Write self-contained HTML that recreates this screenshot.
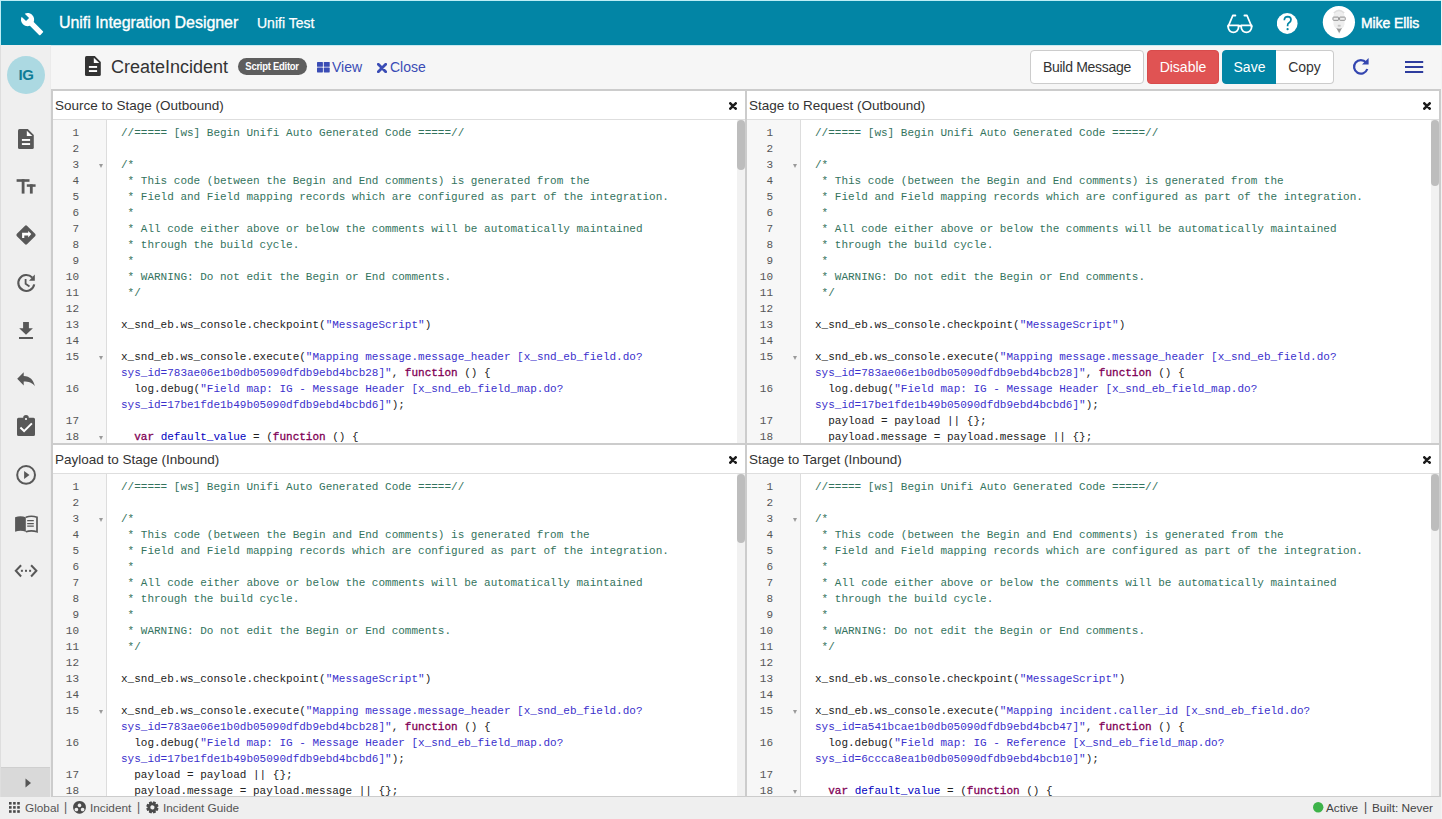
<!DOCTYPE html>
<html><head><meta charset="utf-8"><title>Unifi Integration Designer</title>
<style>
*{box-sizing:border-box;margin:0;padding:0}
html,body{width:1442px;height:819px;overflow:hidden}
body{position:relative;background:#efefef;font-family:"Liberation Sans",sans-serif;color:#333}
.abs{position:absolute}
#topbar{position:absolute;left:0;top:0;width:1441px;height:45px;background:#0285a5;border-top:1px solid #bdeef6;border-left:1px solid #bdeef6}
#topbar .t1{position:absolute;left:58px;top:13px;font-size:16px;-webkit-text-stroke:0.35px #fff;letter-spacing:-0.05px;color:#fff;white-space:nowrap}
#topbar .t2{position:absolute;left:256px;top:14px;font-size:14px;-webkit-text-stroke:0.25px #fff;color:#fff;white-space:nowrap}
#topbar .me{position:absolute;left:1360px;top:14px;font-size:14px;-webkit-text-stroke:0.45px #fff;letter-spacing:-0.1px;color:#fff;white-space:nowrap}
#sidebar{position:absolute;left:0;top:45px;width:51px;height:753px;background:#efefef;border-right:1px solid #ebebeb;border-left:1px solid #dedede}
#sidebar .ig{position:absolute;left:6px;top:11px;width:38px;height:38px;border-radius:50%;background:#acd9e2;color:#0e7c96;font-size:15px;font-weight:bold;text-align:center;line-height:38px;letter-spacing:-0.5px}
#sidebar svg{position:absolute}
#sidebar .exp{position:absolute;left:0px;top:722px;width:49px;height:31px;background:#d9d9d9;border-top:1px solid #cfcfcf}
#toolbar{position:absolute;left:51px;top:45px;width:1391px;height:44px;background:#f6f6f6;border-top:1px solid #c9e9f0}
.tt{position:absolute;white-space:nowrap}
.btn{position:absolute;top:50px;height:34px;font-size:14px;line-height:32.5px;text-align:center;border-radius:4px;white-space:nowrap}
.panel{position:absolute;width:696px;height:356px;border:2px solid #cccccc;background:#fff}
.ph{position:absolute;left:0;top:0;width:100%;height:29px;border-bottom:1px solid #dedede;background:#fff}
.pt{position:absolute;left:2px;top:7px;font-size:13.5px;color:#333;white-space:nowrap}
.px{position:absolute;left:676px;top:11px}
.pc{position:absolute;left:0;top:29px;width:692px;bottom:0;overflow:hidden;background:#fff}
.gut{position:absolute;left:0;top:0;width:54px;height:100%;background:#f7f7f7;border-right:1px solid #dddddd;padding-top:5px}
.code{position:absolute;left:68px;top:5px;font-family:"Liberation Mono",monospace;font-size:11px;color:#222;white-space:pre}
.gl{position:relative;height:16px;font-family:"Liberation Mono",monospace;font-size:11px;line-height:16px;color:#555}
.ln{position:absolute;right:27px;top:0}
.fold{position:absolute;left:45.5px;top:7px;width:0;height:0;border-left:2.5px solid transparent;border-right:2.5px solid transparent;border-top:4px solid #9a9a9a}
.cl{height:16px;line-height:16px}
.c{color:#33735d}.s{color:#3a30cc}.k{color:#7f0055;-webkit-text-stroke:0.3px #7f0055}.d{color:#0000c0}.p{color:#222}
.track{position:absolute;right:0;top:0;width:8px;height:100%;background:#f1f1f1}
.thumb{position:absolute;right:0;top:0;width:8px;background:#bdbdbd;border-radius:4px}
#footer{position:absolute;left:0;top:797px;width:1442px;height:22px;background:#efefef;font-size:12px;color:#444}

#redge{position:absolute;left:1441px;top:0;width:1px;height:819px;background:#f3f3f3}

</style></head><body>
<div id="topbar">
  <svg class="abs" style="left:18.7px;top:10.7px" width="24.2" height="24.2" viewBox="0 0 24 24"><path fill="#fff" d="M22.7 19l-9.1-9.1c.9-2.3.4-5-1.5-6.9-2-2-5-2.4-7.4-1.3L9 6 6 9 1.6 4.7C.4 7.1.9 10.1 2.9 12.1c1.9 1.9 4.6 2.4 6.9 1.5l9.1 9.1c.4.4 1 .4 1.4 0l2.3-2.3c.5-.4.5-1.1.1-1.4z"/></svg>
  <div class="t1">Unifi Integration Designer</div>
  <div class="t2">Unifi Test</div>
  <svg class="abs" style="left:1220px;top:5px" width="40" height="35" viewBox="1220 5 40 35"><g fill="none" stroke="#fff" stroke-width="1.8" stroke-linejoin="round" stroke-linecap="round"><path d="M1227.2 24.3H1237.6V26.1A5.2 5.2 0 0 1 1227.2 26.1Z"/><path d="M1240.2 24.3H1250.6V26.1A5.2 5.2 0 0 1 1240.2 26.1Z"/><path d="M1237.6 25.2Q1238.9 24.3 1240.2 25.2"/><path d="M1227.2 25.5L1231.8 14.5H1234.4"/><path d="M1250.6 25.5L1246 14.5H1243.4"/></g></svg>
  <svg class="abs" style="left:1276px;top:11px" width="22" height="22" viewBox="0 0 22 22"><circle cx="10.2" cy="11.5" r="10.4" fill="#fff"/><path d="M7.3 8.2Q7.5 4.6 10.7 4.6Q14 4.7 14 7.7Q14 9.6 11.8 10.9Q10.6 11.7 10.6 13.5V14.3" fill="none" stroke="#0285a5" stroke-width="1.7"/><circle cx="10.6" cy="17.2" r="1.1" fill="#0285a5"/></svg>
  <svg class="abs" style="left:1321px;top:5px" width="34" height="34" viewBox="1322 5.5 34 34"><circle cx="1338.9" cy="21.7" r="16.1" fill="#fff"/><path d="M1333.5 16Q1333.5 9 1339 9Q1344.5 9 1344.5 16V24Q1344 27 1341.5 28.5L1339.2 34 1336.8 28.5Q1334 27 1333.5 24Z" fill="#eeeeee"/><path d="M1333.8 12.5Q1339 7.5 1344.2 12.5" fill="none" stroke="#dddddd" stroke-width="1.5"/><rect x="1333" y="16.6" width="5.6" height="3.2" rx="0.6" fill="none" stroke="#8f8f8f" stroke-width="1"/><rect x="1339.6" y="16.6" width="5.6" height="3.2" rx="0.6" fill="none" stroke="#8f8f8f" stroke-width="1"/><path d="M1336.3 27.5L1339.2 32.5 1342 27.5Q1339.2 29 1336.3 27.5Z" fill="#999"/><rect x="1337.8" y="24.3" width="2.8" height="1.8" fill="#c4c4c4"/></svg>
  <div class="me">Mike Ellis</div>
</div>
<div id="sidebar">
  <div class="ig">IG</div>
  <div class="exp"><svg style="left:24px;top:10px" width="7" height="10" viewBox="0 0 7 10"><path d="M0.5 0.5L6 5 0.5 9.5z" fill="#555"/></svg></div>
  <svg style="left:-1px;top:0" width="51" height="722" viewBox="0 45 51 722"><g fill="#585858">
<path d="M18 130.5Q18 129 19.5 129H27.8L33.8 135V147.5Q33.8 149 32.3 149H19.5Q18 149 18 147.5Z"/>
<path d="M26.8 130.8V135.9H32.3Z" fill="#fff"/>
<rect x="21.9" y="139" width="8.2" height="1.9" fill="#fff"/><rect x="21.9" y="143.1" width="8.2" height="1.9" fill="#fff"/>
<rect x="16.6" y="179.2" width="12.9" height="2.6"/><rect x="21.7" y="179.2" width="2.8" height="14.4"/>
<rect x="26.8" y="184.3" width="8.8" height="2.5"/><rect x="29.9" y="184.3" width="2.8" height="9.3"/>
<path d="M24.8 225.9Q26 224.7 27.2 225.9L35.1 233.8Q36.3 235 35.1 236.2L27.2 244.1Q26 245.3 24.8 244.1L16.9 236.2Q15.7 235 16.9 233.8Z"/>
<path d="M22.1 238.1V232.7H28.2V230.9L31.3 234.1 28.2 237.4V235.4H24.3V238.1Z" fill="#fff"/>
<path d="M34.2 284.4A8 8 0 1 1 32.2 277.5" fill="none" stroke="#585858" stroke-width="2.1"/>
<path d="M29 280.7L34.8 274.6V280.7Z"/>
<path d="M25.6 279.1V283.8L29.5 286.6" fill="none" stroke="#585858" stroke-width="1.8"/>
<path d="M23.1 322H28.9V328.2H32.9L26 334.8 19.2 328.2H23.1Z"/>
<rect x="19" y="337" width="14" height="2"/>
<path d="M17.2 378.8L23.7 372.2V376.1C30 376.3 33.5 380 34.9 386.2 32.5 382.8 28.5 381.6 23.7 381.6V385.5Z"/>
<path d="M17 419.3Q17 417.8 18.5 417.8H23.2A2.8 2.8 0 0 1 28.8 417.8H33.5Q35 417.8 35 419.3V434.5Q35 436 33.5 436H18.5Q17 436 17 434.5Z"/>
<circle cx="26" cy="419" r="1.1" fill="#fff"/>
<path d="M20.4 427.6L24.1 431.1 31.9 423.4" fill="none" stroke="#fff" stroke-width="2"/>
<circle cx="26.1" cy="474.9" r="8.9" fill="none" stroke="#585858" stroke-width="2"/>
<path d="M24.1 470.9V478.9L29.5 474.9Z"/>
<path d="M15.1 517.2Q20.5 515.3 25.8 517.2V531.8Q20.5 529.9 15.1 531.8Z"/>
<path d="M25.8 517.2Q31.4 515.3 37 517.2V531.8Q31.4 529.9 25.8 531.8" fill="none" stroke="#585858" stroke-width="1.7"/>
<path d="M27.2 520.7H33.8M27.2 523.6H33.8M27.2 526.2H33.8" stroke="#585858" stroke-width="1.2"/>
<path d="M21.1 565.2L15.8 570.8 21.1 576.5M31.1 565.2L36.4 570.8 31.1 576.5" fill="none" stroke="#585858" stroke-width="2"/>
<rect x="20.9" y="569.8" width="2" height="2"/><rect x="25" y="569.8" width="2" height="2"/><rect x="29.1" y="569.8" width="2" height="2"/>
</g></svg>
</div>
<div id="toolbar">
  <svg class="abs" style="left:34px;top:10px" width="17" height="21" viewBox="18 129 17 21"><path d="M18 130.5Q18 129 19.5 129H27.8L33.8 135V147.5Q33.8 149 32.3 149H19.5Q18 149 18 147.5Z" fill="#333"/><path d="M26.8 130.8V135.9H32.3Z" fill="#fff"/><rect x="21.9" y="139" width="8.2" height="1.9" fill="#fff"/><rect x="21.9" y="143.1" width="8.2" height="1.9" fill="#fff"/></svg>
  <div class="tt" style="left:60px;top:11px;font-size:18px;color:#333">CreateIncident</div>
  <div class="tt" style="left:187px;top:12px;width:69px;height:17px;border-radius:9px;background:#5e5e5e;color:#fff;font-size:11px;font-weight:bold;line-height:17px;text-align:center;letter-spacing:-0.3px"><span style="display:inline-block;transform:scaleX(0.86)">Script Editor</span></div>
  <svg class="abs" style="left:265.5px;top:15.5px" width="14" height="12" viewBox="0 0 14 12"><g fill="#3a4cb5"><rect x="0" y="0" width="5.9" height="4.8" rx="0.6"/><rect x="6.8" y="0" width="5.9" height="4.8" rx="0.6"/><rect x="0" y="5.6" width="5.9" height="4.8" rx="0.6"/><rect x="6.8" y="5.6" width="5.9" height="4.8" rx="0.6"/></g></svg>
  <div class="tt" style="left:281px;top:13px;font-size:14px;color:#3a4cb5">View</div>
  <svg class="abs" style="left:326px;top:17px" width="10" height="10" viewBox="0 0 10 10"><path d="M1.3 1.3L8.7 8.7M8.7 1.3L1.3 8.7" stroke="#3a4cb5" stroke-width="2.8" stroke-linecap="round"/></svg>
  <div class="tt" style="left:339px;top:13px;font-size:14px;color:#3a4cb5">Close</div>
  <div class="btn" style="left:979px;top:4px;width:114px;background:#fff;border:1px solid #cccccc;color:#333;letter-spacing:-0.3px">Build Message</div>
  <div class="btn" style="left:1096px;top:4px;width:72px;background:#e05353;border:1px solid #d84b4b;color:#fff">Disable</div>
  <div class="btn" style="left:1171px;top:4px;width:55px;background:#0285a5;border:1px solid #0285a5;color:#fff;border-radius:4px 0 0 4px">Save</div>
  <div class="btn" style="left:1225px;top:4px;width:58px;background:#fff;border:1px solid #cccccc;border-left:none;color:#333;border-radius:0 4px 4px 0">Copy</div>
  <svg class="abs" style="left:1300.3px;top:10.8px" width="20" height="20" viewBox="0 0 20 20"><path d="M15.1 5.5A6.8 6.8 0 1 0 16.3 12" fill="none" stroke="#3446b0" stroke-width="2.2"/><path d="M11 7.5L17.6 7.5 17.6 1.1z" fill="#3446b0"/></svg>
  <svg class="abs" style="left:1354px;top:15px" width="19" height="14" viewBox="0 0 19 14"><g fill="#2e3d9e"><rect x="0" y="0" width="18.2" height="2"/><rect x="0" y="5" width="18.2" height="2"/><rect x="0" y="10" width="18.2" height="2"/></g></svg>
</div>
<div class="panel" style="left:51px;top:89px;height:356px">
<div class="ph"><span class="pt">Source to Stage (Outbound)</span><svg class="px" width="8" height="8" viewBox="0 0 8 8"><path d="M1.3 1.3L6.7 6.7M6.7 1.3L1.3 6.7" stroke="#1c1c1c" stroke-width="2.6" stroke-linecap="round"/></svg></div>
<div class="pc"><div class="gut"><div class="gl"><span class="ln">1</span></div><div class="gl"><span class="ln">2</span></div><div class="gl"><span class="ln">3</span><i class="fold"></i></div><div class="gl"><span class="ln">4</span></div><div class="gl"><span class="ln">5</span></div><div class="gl"><span class="ln">6</span></div><div class="gl"><span class="ln">7</span></div><div class="gl"><span class="ln">8</span></div><div class="gl"><span class="ln">9</span></div><div class="gl"><span class="ln">10</span></div><div class="gl"><span class="ln">11</span></div><div class="gl"><span class="ln">12</span></div><div class="gl"><span class="ln">13</span></div><div class="gl"><span class="ln">14</span></div><div class="gl"><span class="ln">15</span><i class="fold"></i></div><div class="gl"><span class="ln"></span></div><div class="gl"><span class="ln">16</span></div><div class="gl"><span class="ln"></span></div><div class="gl"><span class="ln">17</span></div><div class="gl"><span class="ln">18</span><i class="fold"></i></div></div><div class="code"><div class="cl"><span class="c">//===== [ws] Begin Unifi Auto Generated Code =====//</span></div><div class="cl"></div><div class="cl"><span class="c">/*</span></div><div class="cl"><span class="c"> * This code (between the Begin and End comments) is generated from the</span></div><div class="cl"><span class="c"> * Field and Field mapping records which are configured as part of the integration.</span></div><div class="cl"><span class="c"> *</span></div><div class="cl"><span class="c"> * All code either above or below the comments will be automatically maintained</span></div><div class="cl"><span class="c"> * through the build cycle.</span></div><div class="cl"><span class="c"> *</span></div><div class="cl"><span class="c"> * WARNING: Do not edit the Begin or End comments.</span></div><div class="cl"><span class="c"> */</span></div><div class="cl"></div><div class="cl"><span class="p">x_snd_eb.ws_console.checkpoint(</span><span class="s">"MessageScript"</span><span class="p">)</span></div><div class="cl"></div><div class="cl"><span class="p">x_snd_eb.ws_console.execute(</span><span class="s">"Mapping message.message_header [x_snd_eb_field.do?</span></div><div class="cl"><span class="s">sys_id=783ae06e1b0db05090dfdb9ebd4bcb28]"</span><span class="p">, </span><span class="k">function</span><span class="p"> () {</span></div><div class="cl"><span class="p">  log.debug(</span><span class="s">"Field map: IG - Message Header [x_snd_eb_field_map.do?</span></div><div class="cl"><span class="s">sys_id=17be1fde1b49b05090dfdb9ebd4bcbd6]"</span><span class="p">);</span></div><div class="cl"></div><div class="cl"><span class="p">  </span><span class="k">var</span><span class="p"> </span><span class="d">default_value</span><span class="p"> = (</span><span class="k">function</span><span class="p"> () {</span></div></div>
<div class="track"></div><div class="thumb" style="height:50px"></div></div>
</div><div class="panel" style="left:745px;top:89px;height:356px">
<div class="ph"><span class="pt">Stage to Request (Outbound)</span><svg class="px" width="8" height="8" viewBox="0 0 8 8"><path d="M1.3 1.3L6.7 6.7M6.7 1.3L1.3 6.7" stroke="#1c1c1c" stroke-width="2.6" stroke-linecap="round"/></svg></div>
<div class="pc"><div class="gut"><div class="gl"><span class="ln">1</span></div><div class="gl"><span class="ln">2</span></div><div class="gl"><span class="ln">3</span><i class="fold"></i></div><div class="gl"><span class="ln">4</span></div><div class="gl"><span class="ln">5</span></div><div class="gl"><span class="ln">6</span></div><div class="gl"><span class="ln">7</span></div><div class="gl"><span class="ln">8</span></div><div class="gl"><span class="ln">9</span></div><div class="gl"><span class="ln">10</span></div><div class="gl"><span class="ln">11</span></div><div class="gl"><span class="ln">12</span></div><div class="gl"><span class="ln">13</span></div><div class="gl"><span class="ln">14</span></div><div class="gl"><span class="ln">15</span><i class="fold"></i></div><div class="gl"><span class="ln"></span></div><div class="gl"><span class="ln">16</span></div><div class="gl"><span class="ln"></span></div><div class="gl"><span class="ln">17</span></div><div class="gl"><span class="ln">18</span></div></div><div class="code"><div class="cl"><span class="c">//===== [ws] Begin Unifi Auto Generated Code =====//</span></div><div class="cl"></div><div class="cl"><span class="c">/*</span></div><div class="cl"><span class="c"> * This code (between the Begin and End comments) is generated from the</span></div><div class="cl"><span class="c"> * Field and Field mapping records which are configured as part of the integration.</span></div><div class="cl"><span class="c"> *</span></div><div class="cl"><span class="c"> * All code either above or below the comments will be automatically maintained</span></div><div class="cl"><span class="c"> * through the build cycle.</span></div><div class="cl"><span class="c"> *</span></div><div class="cl"><span class="c"> * WARNING: Do not edit the Begin or End comments.</span></div><div class="cl"><span class="c"> */</span></div><div class="cl"></div><div class="cl"><span class="p">x_snd_eb.ws_console.checkpoint(</span><span class="s">"MessageScript"</span><span class="p">)</span></div><div class="cl"></div><div class="cl"><span class="p">x_snd_eb.ws_console.execute(</span><span class="s">"Mapping message.message_header [x_snd_eb_field.do?</span></div><div class="cl"><span class="s">sys_id=783ae06e1b0db05090dfdb9ebd4bcb28]"</span><span class="p">, </span><span class="k">function</span><span class="p"> () {</span></div><div class="cl"><span class="p">  log.debug(</span><span class="s">"Field map: IG - Message Header [x_snd_eb_field_map.do?</span></div><div class="cl"><span class="s">sys_id=17be1fde1b49b05090dfdb9ebd4bcbd6]"</span><span class="p">);</span></div><div class="cl"><span class="p">  payload = payload || {};</span></div><div class="cl"><span class="p">  payload.message = payload.message || {};</span></div></div>
<div class="track"></div><div class="thumb" style="height:66px"></div></div>
</div><div class="panel" style="left:51px;top:443px;height:355px">
<div class="ph"><span class="pt">Payload to Stage (Inbound)</span><svg class="px" width="8" height="8" viewBox="0 0 8 8"><path d="M1.3 1.3L6.7 6.7M6.7 1.3L1.3 6.7" stroke="#1c1c1c" stroke-width="2.6" stroke-linecap="round"/></svg></div>
<div class="pc"><div class="gut"><div class="gl"><span class="ln">1</span></div><div class="gl"><span class="ln">2</span></div><div class="gl"><span class="ln">3</span><i class="fold"></i></div><div class="gl"><span class="ln">4</span></div><div class="gl"><span class="ln">5</span></div><div class="gl"><span class="ln">6</span></div><div class="gl"><span class="ln">7</span></div><div class="gl"><span class="ln">8</span></div><div class="gl"><span class="ln">9</span></div><div class="gl"><span class="ln">10</span></div><div class="gl"><span class="ln">11</span></div><div class="gl"><span class="ln">12</span></div><div class="gl"><span class="ln">13</span></div><div class="gl"><span class="ln">14</span></div><div class="gl"><span class="ln">15</span><i class="fold"></i></div><div class="gl"><span class="ln"></span></div><div class="gl"><span class="ln">16</span></div><div class="gl"><span class="ln"></span></div><div class="gl"><span class="ln">17</span></div><div class="gl"><span class="ln">18</span></div></div><div class="code"><div class="cl"><span class="c">//===== [ws] Begin Unifi Auto Generated Code =====//</span></div><div class="cl"></div><div class="cl"><span class="c">/*</span></div><div class="cl"><span class="c"> * This code (between the Begin and End comments) is generated from the</span></div><div class="cl"><span class="c"> * Field and Field mapping records which are configured as part of the integration.</span></div><div class="cl"><span class="c"> *</span></div><div class="cl"><span class="c"> * All code either above or below the comments will be automatically maintained</span></div><div class="cl"><span class="c"> * through the build cycle.</span></div><div class="cl"><span class="c"> *</span></div><div class="cl"><span class="c"> * WARNING: Do not edit the Begin or End comments.</span></div><div class="cl"><span class="c"> */</span></div><div class="cl"></div><div class="cl"><span class="p">x_snd_eb.ws_console.checkpoint(</span><span class="s">"MessageScript"</span><span class="p">)</span></div><div class="cl"></div><div class="cl"><span class="p">x_snd_eb.ws_console.execute(</span><span class="s">"Mapping message.message_header [x_snd_eb_field.do?</span></div><div class="cl"><span class="s">sys_id=783ae06e1b0db05090dfdb9ebd4bcb28]"</span><span class="p">, </span><span class="k">function</span><span class="p"> () {</span></div><div class="cl"><span class="p">  log.debug(</span><span class="s">"Field map: IG - Message Header [x_snd_eb_field_map.do?</span></div><div class="cl"><span class="s">sys_id=17be1fde1b49b05090dfdb9ebd4bcbd6]"</span><span class="p">);</span></div><div class="cl"><span class="p">  payload = payload || {};</span></div><div class="cl"><span class="p">  payload.message = payload.message || {};</span></div></div>
<div class="track"></div><div class="thumb" style="height:69px"></div></div>
</div><div class="panel" style="left:745px;top:443px;height:355px">
<div class="ph"><span class="pt">Stage to Target (Inbound)</span><svg class="px" width="8" height="8" viewBox="0 0 8 8"><path d="M1.3 1.3L6.7 6.7M6.7 1.3L1.3 6.7" stroke="#1c1c1c" stroke-width="2.6" stroke-linecap="round"/></svg></div>
<div class="pc"><div class="gut"><div class="gl"><span class="ln">1</span></div><div class="gl"><span class="ln">2</span></div><div class="gl"><span class="ln">3</span><i class="fold"></i></div><div class="gl"><span class="ln">4</span></div><div class="gl"><span class="ln">5</span></div><div class="gl"><span class="ln">6</span></div><div class="gl"><span class="ln">7</span></div><div class="gl"><span class="ln">8</span></div><div class="gl"><span class="ln">9</span></div><div class="gl"><span class="ln">10</span></div><div class="gl"><span class="ln">11</span></div><div class="gl"><span class="ln">12</span></div><div class="gl"><span class="ln">13</span></div><div class="gl"><span class="ln">14</span></div><div class="gl"><span class="ln">15</span><i class="fold"></i></div><div class="gl"><span class="ln"></span></div><div class="gl"><span class="ln">16</span></div><div class="gl"><span class="ln"></span></div><div class="gl"><span class="ln">17</span></div><div class="gl"><span class="ln">18</span><i class="fold"></i></div></div><div class="code"><div class="cl"><span class="c">//===== [ws] Begin Unifi Auto Generated Code =====//</span></div><div class="cl"></div><div class="cl"><span class="c">/*</span></div><div class="cl"><span class="c"> * This code (between the Begin and End comments) is generated from the</span></div><div class="cl"><span class="c"> * Field and Field mapping records which are configured as part of the integration.</span></div><div class="cl"><span class="c"> *</span></div><div class="cl"><span class="c"> * All code either above or below the comments will be automatically maintained</span></div><div class="cl"><span class="c"> * through the build cycle.</span></div><div class="cl"><span class="c"> *</span></div><div class="cl"><span class="c"> * WARNING: Do not edit the Begin or End comments.</span></div><div class="cl"><span class="c"> */</span></div><div class="cl"></div><div class="cl"><span class="p">x_snd_eb.ws_console.checkpoint(</span><span class="s">"MessageScript"</span><span class="p">)</span></div><div class="cl"></div><div class="cl"><span class="p">x_snd_eb.ws_console.execute(</span><span class="s">"Mapping incident.caller_id [x_snd_eb_field.do?</span></div><div class="cl"><span class="s">sys_id=a541bcae1b0db05090dfdb9ebd4bcb47]"</span><span class="p">, </span><span class="k">function</span><span class="p"> () {</span></div><div class="cl"><span class="p">  log.debug(</span><span class="s">"Field map: IG - Reference [x_snd_eb_field_map.do?</span></div><div class="cl"><span class="s">sys_id=6ccca8ea1b0db05090dfdb9ebd4bcb10]"</span><span class="p">);</span></div><div class="cl"></div><div class="cl"><span class="p">  </span><span class="k">var</span><span class="p"> </span><span class="d">default_value</span><span class="p"> = (</span><span class="k">function</span><span class="p"> () {</span></div></div>
<div class="track"></div><div class="thumb" style="height:57px"></div></div>
</div>
<div id="footer">
  <svg style="position:absolute;left:0;top:0" width="1442" height="22" viewBox="0 797 1442 22">
<g fill="#4a4a4a">
<rect x="9" y="802" width="2.6" height="2.6"/><rect x="13.1" y="802" width="2.6" height="2.6"/><rect x="17.2" y="802" width="2.6" height="2.6"/>
<rect x="9" y="806.1" width="2.6" height="2.6"/><rect x="13.1" y="806.1" width="2.6" height="2.6"/><rect x="17.2" y="806.1" width="2.6" height="2.6"/>
<rect x="9" y="810.2" width="2.6" height="2.6"/><rect x="13.1" y="810.2" width="2.6" height="2.6"/><rect x="17.2" y="810.2" width="2.6" height="2.6"/>
<path fill-rule="evenodd" d="M79.5 800.9a6.4 6.4 0 1 0 0.01 0zM79.5 803.6a1.8 1.8 0 1 0 0.01 0zM76.4 807.7a1.8 1.8 0 1 0 0.01 0zM82.6 807.7a1.8 1.8 0 1 0 0.01 0z"/>
<g transform="translate(152.4 807.4) rotate(22.5)"><path fill-rule="evenodd" d="M4.40 -1.66L6.15 -1.37L6.15 1.37L4.40 1.66L4.28 1.94L5.32 3.38L3.38 5.32L1.94 4.28L1.66 4.40L1.37 6.15L-1.37 6.15L-1.66 4.40L-1.94 4.28L-3.38 5.32L-5.32 3.38L-4.28 1.94L-4.40 1.66L-6.15 1.37L-6.15 -1.37L-4.40 -1.66L-4.28 -1.94L-5.32 -3.38L-3.38 -5.32L-1.94 -4.28L-1.66 -4.40L-1.37 -6.15L1.37 -6.15L1.66 -4.40L1.94 -4.28L3.38 -5.32L5.32 -3.38L4.28 -1.94Z M2.1 0A2.1 2.1 0 1 0 -2.1 0A2.1 2.1 0 1 0 2.1 0Z"/></g>
<circle cx="1318.2" cy="807.2" r="5.2" fill="#3db34a"/>
</g></svg>
<div class="tt" style="left:25px;top:4px;font-size:11.8px;color:#555">Global</div>
<div class="tt" style="left:64px;top:3px;font-size:12px;color:#555">|</div>
<div class="tt" style="left:90px;top:4px;font-size:11.8px;color:#555">Incident</div>
<div class="tt" style="left:137px;top:3px;font-size:12px;color:#555">|</div>
<div class="tt" style="left:163px;top:4px;font-size:11.8px;color:#555">Incident Guide</div>
<div class="tt" style="left:1326px;top:4px;font-size:11.8px;color:#444">Active</div>
<div class="tt" style="left:1364px;top:3px;font-size:12px;color:#444">|</div>
<div class="tt" style="left:1372px;top:4px;font-size:11.8px;color:#444">Built: Never</div>
</div>

<div id="redge"></div>

</body></html>
